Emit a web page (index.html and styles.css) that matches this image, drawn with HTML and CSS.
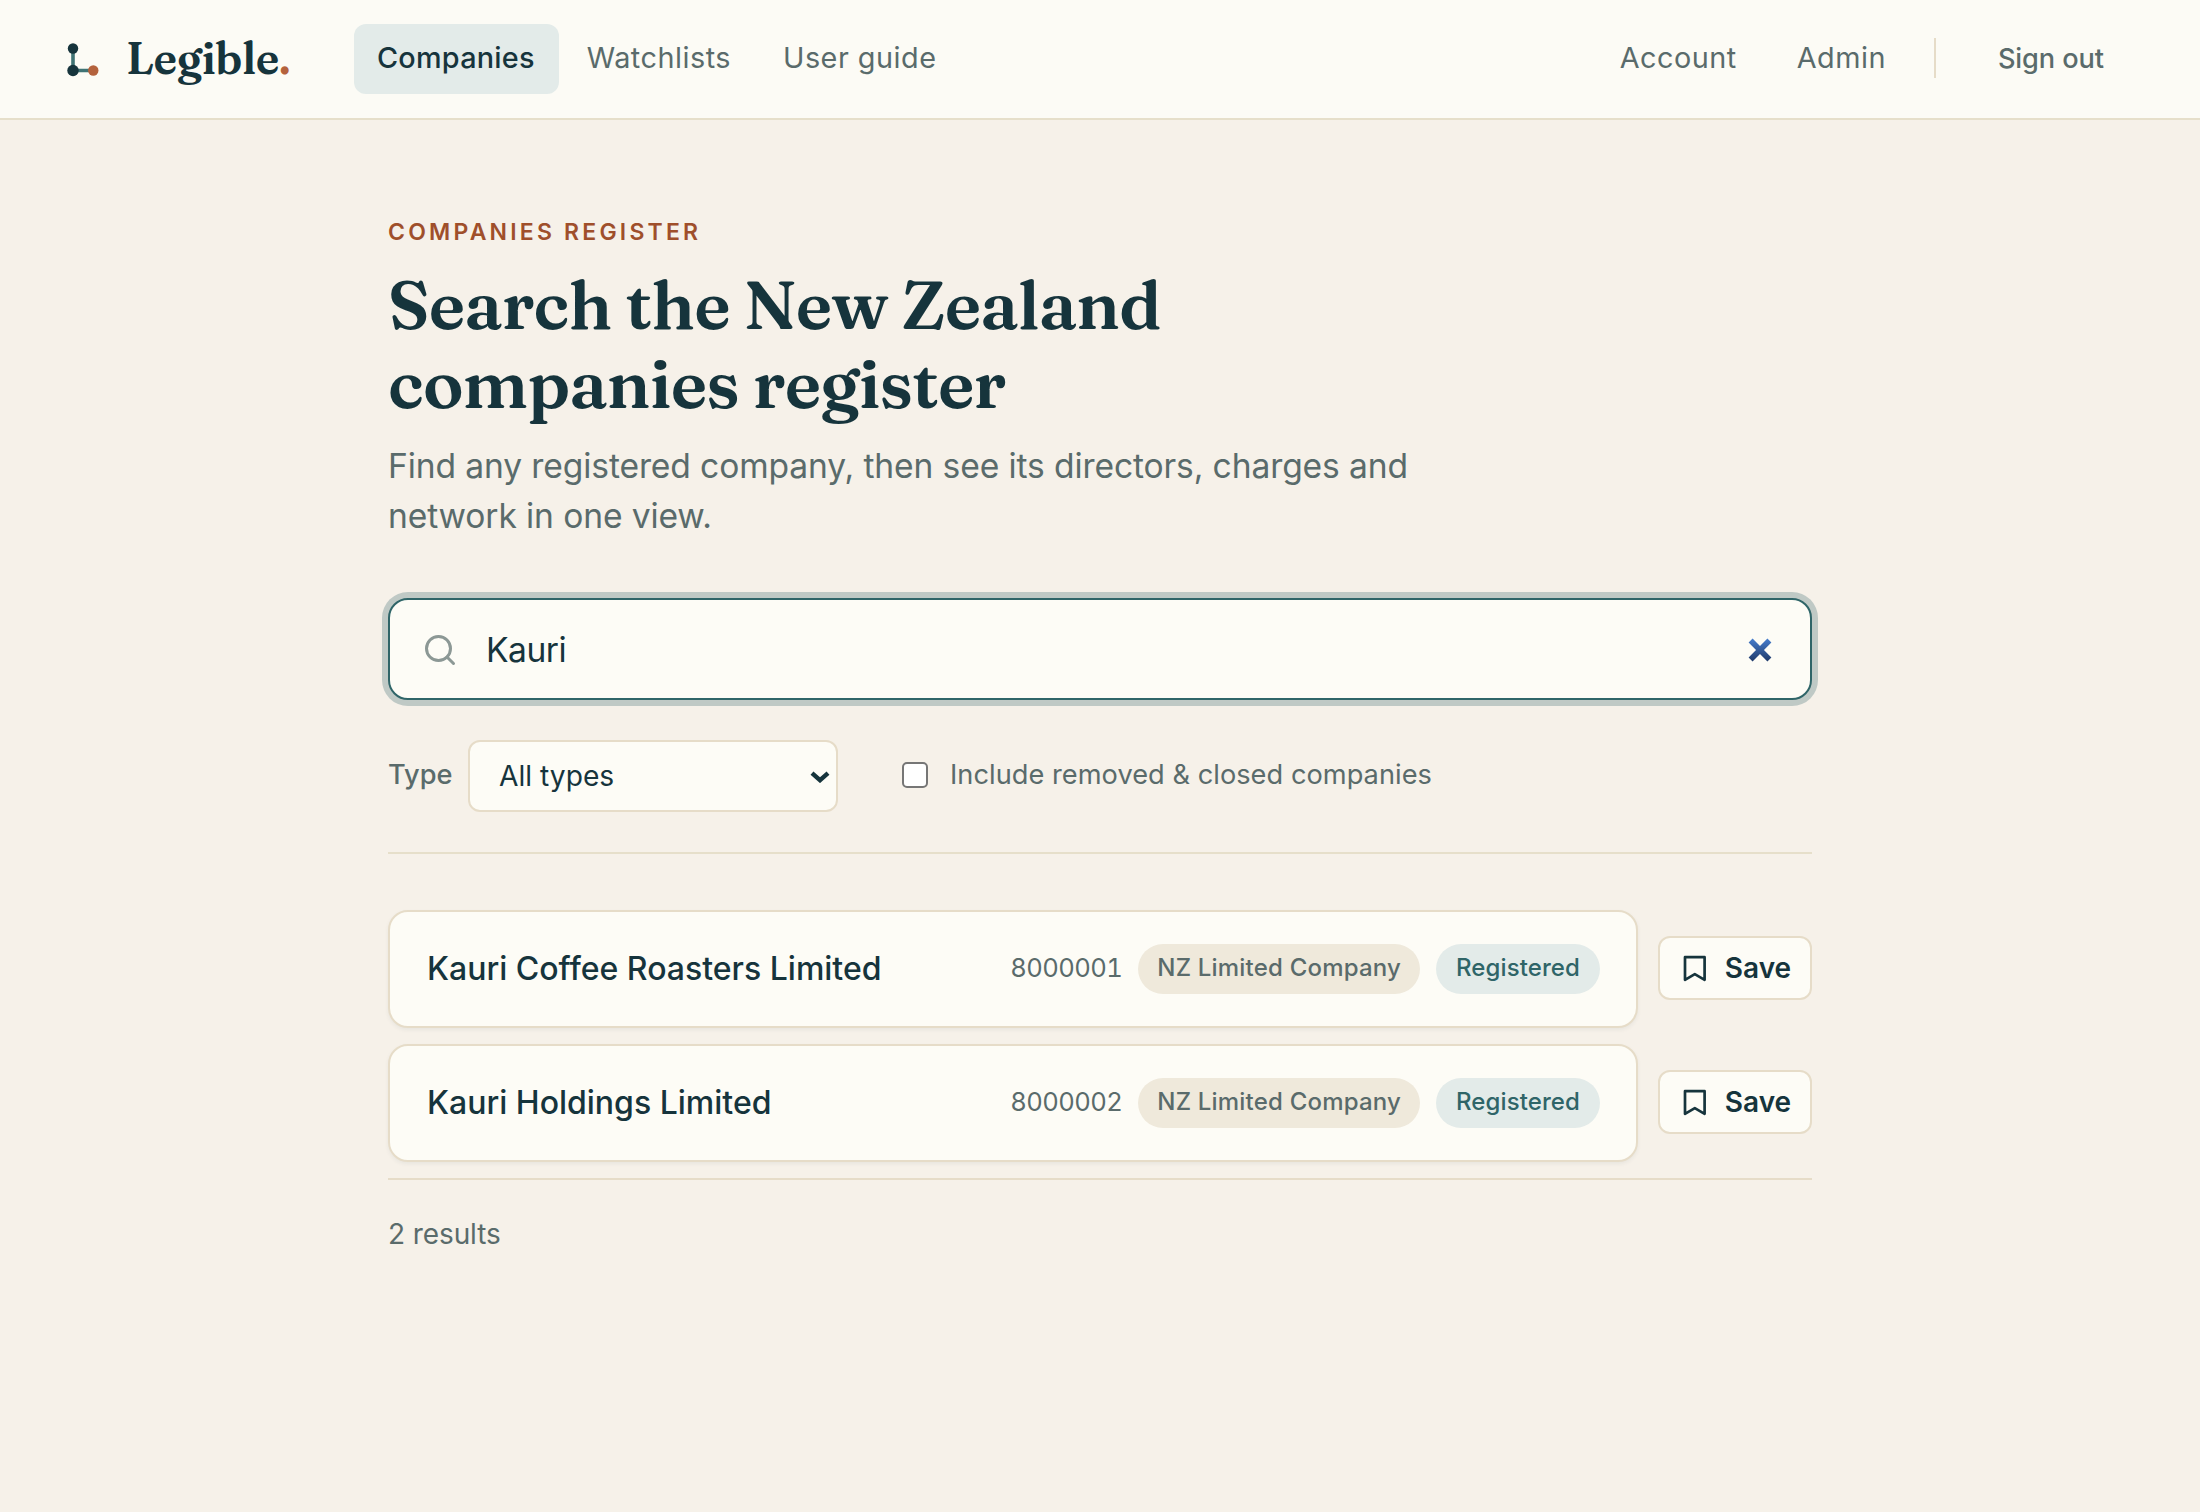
FILE: index.html
```html
<!DOCTYPE html>
<html lang="en">
<head>
  <meta charset="UTF-8" />
  <meta name="viewport" content="width=device-width, initial-scale=1.0" />
  <title>Companies - Legible</title>
  <link rel="stylesheet" href="styles.css">
</head>
<body>
  <header class="topbar">
    <a class="brand">
      <svg class="brand-mark" viewBox="0 0 40 40">
        <path d="M11 9.5v22h20.3" fill="none" stroke="#3f7374" stroke-width="3.6" />
        <circle cx="11" cy="9.5" r="5.2" fill="#16343c" />
        <circle cx="11" cy="31.5" r="5.7" fill="#16343c" />
        <circle cx="31.3" cy="31.5" r="5.2" fill="#b4623c" />
      </svg>
      <span class="brand-name">Legible<span class="brand-dot">.</span></span>
    </a>
    <nav class="nav">
      <a class="nav-link active">Companies</a>
      <a class="nav-link">Watchlists</a>
      <a class="nav-link">User guide</a>
    </nav>
    <div class="account">
      <a class="nav-link">Account</a>
      <a class="nav-link">Admin</a>
      <span class="separator"></span>
      <button class="sign-out">Sign out</button>
    </div>
  </header>

  <main class="page">
    <div class="eyebrow">COMPANIES REGISTER</div>
    <h1>Search the New Zealand<br>companies register</h1>
    <p class="lead">Find any registered company, then see its directors, charges and<br>network in one view.</p>

    <div class="search">
      <svg class="search-icon" viewBox="0 0 24 24">
        <circle cx="11" cy="11" r="8" />
        <path d="M21 21l-4.35-4.35" />
      </svg>
      <input class="search-input" type="text" value="Kauri">
      <svg class="clear-icon" viewBox="0 0 24 24">
        <defs>
          <linearGradient id="clear-fill" gradientUnits="userSpaceOnUse" x1="0" y1="0" x2="0" y2="24">
            <stop offset="0" stop-color="#477fd0" />
            <stop offset="1" stop-color="#1d3766" />
          </linearGradient>
        </defs>
        <path d="M2.6 2.6l18.8 18.8M21.4 2.6L2.6 21.4" stroke="url(#clear-fill)" />
      </svg>
    </div>

    <div class="filters">
      <label class="filter-label" for="type">Type</label>
      <div class="select">
        <select id="type">
          <option>All types</option>
        </select>
        <svg class="chevron" viewBox="0 0 20 12"><path d="M2 2.2l8 7 8-7" /></svg>
      </div>
      <label class="check"><input type="checkbox">Include removed &amp; closed companies</label>
    </div>

    <div class="results">
      <div class="result">
        <div class="card">
          <span class="name">Kauri Coffee Roasters Limited</span>
          <span class="number">8000001</span>
          <span class="pill">NZ Limited Company</span>
          <span class="pill status">Registered</span>
        </div>
        <button class="save">
          <svg viewBox="0 0 28 28"><path d="M4 3.2h19.6v22.6l-9.8-5.6L4 25.8z" /></svg>
          Save
        </button>
      </div>
      <div class="result">
        <div class="card">
          <span class="name">Kauri Holdings Limited</span>
          <span class="number">8000002</span>
          <span class="pill">NZ Limited Company</span>
          <span class="pill status">Registered</span>
        </div>
        <button class="save">
          <svg viewBox="0 0 28 28"><path d="M4 3.2h19.6v22.6l-9.8-5.6L4 25.8z" /></svg>
          Save
        </button>
      </div>
    </div>
    <div class="count">2 results</div>
  </main>
</body>
</html>
```
FILE: styles.css
```css
* {
  box-sizing: border-box;
}
body {
  margin: 0;
  background-color: #f6f1e9;
  color: #16343c;
  font-family: Inter, "Liberation Sans", sans-serif;
}
button, input, select {
  font-family: inherit;
  color: inherit;
}
.topbar {
  display: flex;
  align-items: center;
  height: 120px;
  padding: 0 72px 0 62px;
  background-color: #fcfbf5;
  border-bottom: 2px solid #e6dfca;
}
.brand {
  display: flex;
  align-items: center;
  gap: 24px;
  width: 292px;
}
.brand-mark {
  width: 40px;
  height: 40px;
}
.brand-name {
  padding-bottom: 2px;
  font: 600 44px/60px Fraunces, "Liberation Serif", serif;
  letter-spacing: -0.4px;
}
.brand-dot {
  color: #b4623c;
}
.nav, .account {
  display: flex;
  align-items: center;
  gap: 4px;
}
.nav-link {
  height: 70px;
  padding: 0 24px;
  border-radius: 12px;
  font-size: 28.8px;
  line-height: 68px;
  letter-spacing: 0.5px;
  color: #5a6b6b;
}
.nav-link.active {
  padding: 0 24px 0 23px;
  background-color: #e3ebe9;
  color: #16343c;
  font-weight: 500;
  letter-spacing: 0.25px;
}
.account {
  gap: 12px;
  margin-left: auto;
}
.separator {
  width: 2px;
  height: 40px;
  margin: 0 14px 2px 12px;
  background-color: #e6dcc8;
}
.sign-out {
  padding: 0 24px;
  margin-left: 12px;
  border: none;
  background: none;
  font-size: 27.2px;
  font-weight: 500;
  line-height: 66px;
  letter-spacing: -0.1px;
  color: #5a6b6b;
}
.page {
  width: 1424px;
  margin: 0 auto;
  padding-top: 96px;
}
.eyebrow {
  font-size: 23px;
  font-weight: 600;
  line-height: 32px;
  letter-spacing: 3.2px;
  color: #9f4f2b;
}
h1 {
  margin: 17px 0 19px;
  font: 600 68px/78.5px Fraunces, "Liberation Serif", serif;
  letter-spacing: -0.85px;
}
.lead {
  margin: 0 0 57px;
  font-size: 33.6px;
  line-height: 50px;
  letter-spacing: -0.11px;
  color: #5a6b6b;
}
.search {
  display: flex;
  align-items: center;
  height: 102px;
  padding: 0 38px 0 32px;
  background-color: #fdfcf6;
  border: 2px solid #2f6568;
  border-radius: 20px;
  box-shadow: 0 0 0 6px #bfc9c5;
}
.search-icon {
  width: 36px;
  height: 36px;
  margin-top: 1px;
  fill: none;
  stroke: #8c9895;
  stroke-width: 2;
  stroke-linecap: round;
}
.search-input {
  flex: 1;
  min-width: 0;
  margin-left: 28px;
  padding: 0;
  border: none;
  outline: none;
  background: none;
  font-size: 33.6px;
  letter-spacing: -0.5px;
}
.clear-icon {
  width: 24px;
  height: 24px;
  margin-top: 2px;
  stroke-width: 5.6;
}
.filters {
  display: flex;
  align-items: center;
  margin-top: 40px;
  padding-bottom: 40px;
  border-bottom: 2px solid #e6dfca;
  font-size: 27.2px;
  color: #5a6b6b;
}
.filter-label {
  width: 80px;
  font-weight: 500;
  padding-bottom: 4px;
}
.select {
  position: relative;
  width: 370px;
  height: 72px;
}
.select select {
  appearance: none;
  width: 100%;
  height: 100%;
  padding: 0 29px;
  background-color: #fdfcf6;
  border: 2px solid #e6dcc8;
  border-radius: 12px;
  font-size: 28.2px;
  color: #16343c;
}
.chevron {
  position: absolute;
  right: 8px;
  top: 31px;
  width: 20px;
  height: 12px;
  fill: none;
  stroke: #16343c;
  stroke-width: 4.4;
}
.check {
  display: flex;
  align-items: center;
  margin-left: 64px;
  padding-bottom: 4px;
  letter-spacing: 0.04px;
}
.check input {
  appearance: none;
  width: 26px;
  height: 26px;
  margin: 2px 22px 0 0;
  background-color: #fff;
  border: 2px solid #767676;
  border-radius: 5px;
}
.results {
  display: flex;
  flex-direction: column;
  gap: 16px;
  margin-top: 56px;
  padding-bottom: 16px;
  border-bottom: 2px solid #e6dcc8;
}
.result {
  display: flex;
  align-items: center;
  gap: 20px;
}
.card {
  flex: 1;
  display: flex;
  align-items: center;
  gap: 16px;
  height: 118px;
  padding: 0 36px 0 37px;
  background-color: #fdfcf6;
  border: 2px solid #e6dcc8;
  border-radius: 20px;
  box-shadow: 0 2px 4px rgba(22, 52, 60, 0.06);
}
.name {
  flex: 1;
  padding-bottom: 2px;
  font-size: 32px;
  font-weight: 500;
}
.number {
  font-size: 25.6px;
  font-variant-numeric: tabular-nums;
  letter-spacing: -0.6px;
  padding-bottom: 4px;
  color: #5a6b6b;
}
.pill {
  height: 50px;
  padding: 0 19px;
  border-radius: 25px;
  background-color: #efe9db;
  font-size: 24px;
  font-weight: 500;
  line-height: 48px;
  letter-spacing: 0.2px;
  color: #5a6b6b;
}
.pill.status {
  padding: 0 20px;
  letter-spacing: 0.1px;
  background-color: #e3ebe9;
  color: #2f6568;
}
.save {
  display: flex;
  align-items: center;
  justify-content: center;
  gap: 16px;
  width: 154px;
  height: 64px;
  margin-bottom: 2px;
  padding: 0 0 0 2px;
  background-color: #fdfcf6;
  border: 2px solid #e6dcc8;
  border-radius: 12px;
  font-size: 28px;
  font-weight: 600;
}
.save svg {
  width: 28px;
  height: 28px;
  fill: none;
  stroke: #16343c;
  stroke-width: 2.7;
  stroke-linejoin: round;
}
.count {
  padding-top: 36px;
  font-size: 28px;
  line-height: 36px;
  letter-spacing: -0.1px;
  color: #5a6b6b;
}
```
